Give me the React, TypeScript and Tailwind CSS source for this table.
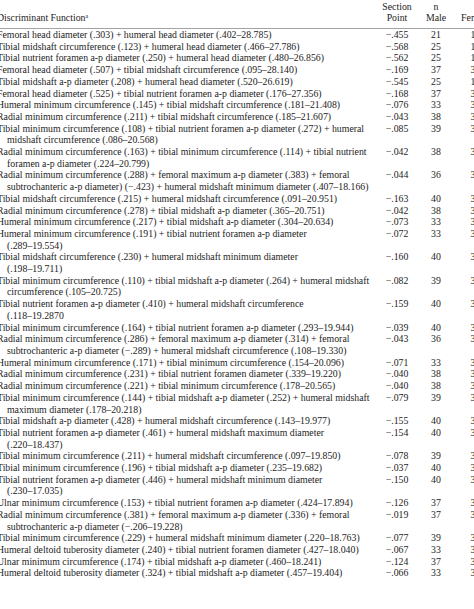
type Row = { fn: string[]; point: string; male: string; female: string };

const rows: Row[] = [
  { fn: ['Femoral head diameter (.303) + humeral head diameter (.402–28.785)'], point: '−.455', male: '21', female: '16' },
  { fn: ['Tibial midshaft circumference (.123) + humeral head diameter (.466–27.786)'], point: '−.568', male: '25', female: '17' },
  { fn: ['Tibial nutrient foramen a-p diameter (.250) + humeral head diameter (.480–26.856)'], point: '−.562', male: '25', female: '17' },
  { fn: ['Femoral head diameter (.507) + tibial midshaft circumference (.095–28.140)'], point: '−.169', male: '37', female: '35' },
  { fn: ['Tibial midshaft a-p diameter (.208) + humeral head diameter (.520–26.619)'], point: '−.545', male: '25', female: '17' },
  { fn: ['Femoral head diameter (.525) + tibial nutrient foramen a-p diameter (.176–27.356)'], point: '−.168', male: '37', female: '35' },
  { fn: ['Humeral minimum circumference (.145) + tibial midshaft circumference (.181–21.408)'], point: '−.076', male: '33', female: '36' },
  { fn: ['Radial minimum circumference (.211) + tibial midshaft circumference (.185–21.607)'], point: '−.043', male: '38', female: '38' },
  {
    fn: ['Tibial minimum circumference (.108) + tibial nutrient foramen a-p diameter (.272) + humeral', 'midshaft circumference (.086–20.568)'],
    point: '−.085', male: '39', female: '36',
  },
  {
    fn: ['Radial minimum circumference (.163) + tibial minimum circumference (.114) + tibial nutrient', 'foramen a-p diameter (.224–20.799)'],
    point: '−.042', male: '38', female: '37',
  },
  {
    fn: ['Radial minimum circumference (.288) + femoral maximum a-p diameter (.383) + femoral', 'subtrochanteric a-p diameter) (−.423) + humeral midshaft minimum diameter (.407–18.166)'],
    point: '−.044', male: '36', female: '35',
  },
  { fn: ['Tibial midshaft circumference (.215) + humeral midshaft circumference (.091–20.951)'], point: '−.163', male: '40', female: '36' },
  { fn: ['Radial minimum circumference (.278) + tibial midshaft a-p diameter (.365–20.751)'], point: '−.042', male: '38', female: '38' },
  { fn: ['Humeral minimum circumference (.217) + tibial midshaft a-p diameter (.304–20.634)'], point: '−.073', male: '33', female: '36' },
  { fn: ['Humeral minimum circumference (.191) + tibial nutrient foramen a-p diameter', '(.289–19.554)'], point: '−.072', male: '33', female: '36' },
  { fn: ['Tibial midshaft circumference (.230) + humeral midshaft minimum diameter', '(.198–19.711)'], point: '−.160', male: '40', female: '36' },
  {
    fn: ['Tibial minimum circumference (.110) + tibial midshaft a-p diameter (.264) + humeral midshaft', 'circumference (.105–20.725)'],
    point: '−.082', male: '39', female: '36',
  },
  { fn: ['Tibial nutrient foramen a-p diameter (.410) + humeral midshaft circumference', '(.118–19.2870'], point: '−.159', male: '40', female: '36' },
  { fn: ['Tibial minimum circumference (.164) + tibial nutrient foramen a-p diameter (.293–19.944)'], point: '−.039', male: '40', female: '37' },
  {
    fn: ['Radial minimum circumference (.286) + femoral maximum a-p diameter (.314) + femoral', 'subtrochanteric a-p diameter (−.289) + humeral midshaft circumference (.108–19.330)'],
    point: '−.043', male: '36', female: '35',
  },
  { fn: ['Humeral minimum circumference (.171) + tibial minimum circumference (.154–20.096)'], point: '−.071', male: '33', female: '36' },
  { fn: ['Radial minimum circumference (.231) + tibial nutrient foramen diameter (.339–19.220)'], point: '−.040', male: '38', female: '38' },
  { fn: ['Radial minimum circumference (.221) + tibial minimum circumference (.178–20.565)'], point: '−.040', male: '38', female: '38' },
  {
    fn: ['Tibial minimum circumference (.144) + tibial midshaft a-p diameter (.252) + humeral midshaft', 'maximum diameter (.178–20.218)'],
    point: '−.079', male: '39', female: '36',
  },
  { fn: ['Tibial midshaft a-p diameter (.428) + humeral midshaft circumference (.143–19.977)'], point: '−.155', male: '40', female: '36' },
  { fn: ['Tibial nutrient foramen a-p diameter (.461) + humeral midshaft maximum diameter', '(.220–18.437)'], point: '−.154', male: '40', female: '36' },
  { fn: ['Tibial minimum circumference (.211) + humeral midshaft circumference (.097–19.850)'], point: '−.078', male: '39', female: '36' },
  { fn: ['Tibial minimum circumference (.196) + tibial midshaft a-p diameter (.235–19.682)'], point: '−.037', male: '40', female: '37' },
  { fn: ['Tibial nutrient foramen a-p diameter (.446) + humeral midshaft minimum diameter', '(.230–17.035)'], point: '−.150', male: '40', female: '36' },
  { fn: ['Ulnar minimum circumference (.153) + tibial nutrient foramen a-p diameter (.424–17.894)'], point: '−.126', male: '37', female: '35' },
  {
    fn: ['Radial minimum circumference (.381) + femoral maximum a-p diameter (.336) + femoral', 'subtrochanteric a-p diameter (−.206–19.228)'],
    point: '−.019', male: '37', female: '35',
  },
  { fn: ['Tibial minimum circumference (.229) + humeral midshaft minimum diameter (.220–18.763)'], point: '−.077', male: '39', female: '36' },
  { fn: ['Humeral deltoid tuberosity diameter (.240) + tibial nutrient foramen diameter (.427–18.040)'], point: '−.067', male: '33', female: '36' },
  { fn: ['Ulnar minimum circumference (.174) + tibial midshaft a-p diameter (.460–18.241)'], point: '−.124', male: '37', female: '35' },
  { fn: ['Humeral deltoid tuberosity diameter (.324) + tibial midshaft a-p diameter (.457–19.404)'], point: '−.066', male: '33', female: '36' },
];

export default function App() {
  return (
    <div className="w-[474px] h-[609px] overflow-hidden bg-white">
      <div className="-ml-[3px] w-[530px] font-['Liberation_Serif',serif] text-[9.8px] leading-[11.7px] text-[#1c1c1c]">
        {/* header */}
        <div className="grid grid-cols-[375px_50px_28px_51px] items-end pt-[1px] pb-[5px] leading-[11px] border-b border-[#a3a3a3]">
          <div>
            Discriminant Function<sup className="text-[6px]">a</sup>
          </div>
          <div className="text-center">
            Section
            <br />
            Point
          </div>
          <div className="text-center">
            n
            <br />
            Male
          </div>
          <div className="text-center">Female</div>
        </div>

        {rows.map((r, i) => (
          <div key={i} className="grid grid-cols-[375px_50px_28px_51px] items-start">
            <div className="whitespace-nowrap">
              {r.fn.map((line, j) => (
                <div key={j} className={j > 0 ? 'pl-[10px]' : ''}>
                  {line}
                </div>
              ))}
            </div>
            <div className="text-center">{r.point}</div>
            <div className="text-center">{r.male}</div>
            <div className="text-center">{r.female}</div>
          </div>
        ))}
      </div>
    </div>
  );
}
